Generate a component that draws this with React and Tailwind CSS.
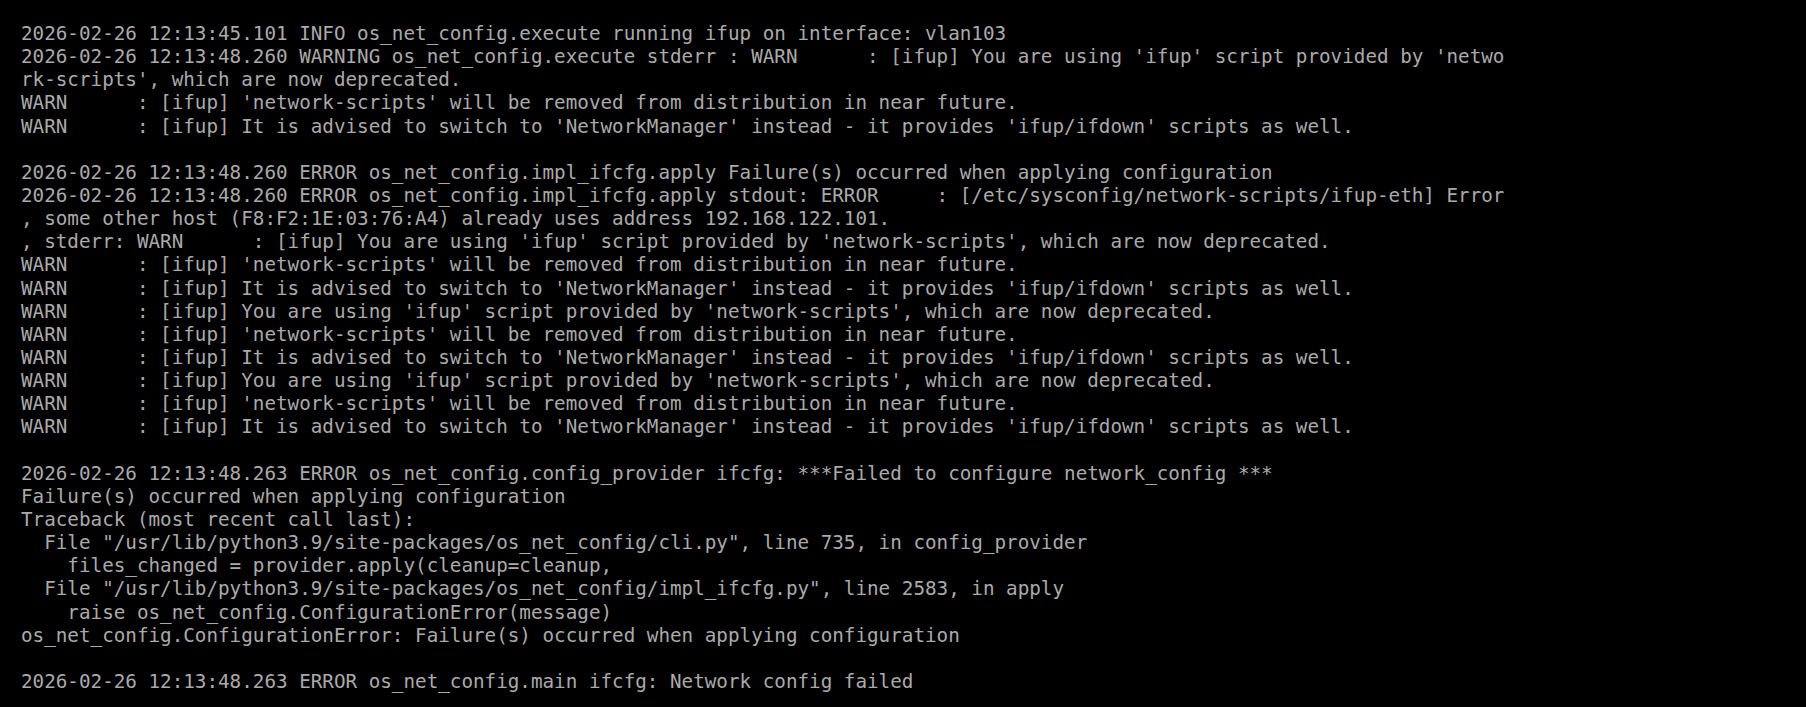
const LINES = [
  "2026-02-26 12:13:45.101 INFO os_net_config.execute running ifup on interface: vlan103",
  "2026-02-26 12:13:48.260 WARNING os_net_config.execute stderr : WARN      : [ifup] You are using 'ifup' script provided by 'netwo",
  "rk-scripts', which are now deprecated.",
  "WARN      : [ifup] 'network-scripts' will be removed from distribution in near future.",
  "WARN      : [ifup] It is advised to switch to 'NetworkManager' instead - it provides 'ifup/ifdown' scripts as well.",
  "",
  "2026-02-26 12:13:48.260 ERROR os_net_config.impl_ifcfg.apply Failure(s) occurred when applying configuration",
  "2026-02-26 12:13:48.260 ERROR os_net_config.impl_ifcfg.apply stdout: ERROR     : [/etc/sysconfig/network-scripts/ifup-eth] Error",
  ", some other host (F8:F2:1E:03:76:A4) already uses address 192.168.122.101.",
  ", stderr: WARN      : [ifup] You are using 'ifup' script provided by 'network-scripts', which are now deprecated.",
  "WARN      : [ifup] 'network-scripts' will be removed from distribution in near future.",
  "WARN      : [ifup] It is advised to switch to 'NetworkManager' instead - it provides 'ifup/ifdown' scripts as well.",
  "WARN      : [ifup] You are using 'ifup' script provided by 'network-scripts', which are now deprecated.",
  "WARN      : [ifup] 'network-scripts' will be removed from distribution in near future.",
  "WARN      : [ifup] It is advised to switch to 'NetworkManager' instead - it provides 'ifup/ifdown' scripts as well.",
  "WARN      : [ifup] You are using 'ifup' script provided by 'network-scripts', which are now deprecated.",
  "WARN      : [ifup] 'network-scripts' will be removed from distribution in near future.",
  "WARN      : [ifup] It is advised to switch to 'NetworkManager' instead - it provides 'ifup/ifdown' scripts as well.",
  "",
  "2026-02-26 12:13:48.263 ERROR os_net_config.config_provider ifcfg: ***Failed to configure network_config ***",
  "Failure(s) occurred when applying configuration",
  "Traceback (most recent call last):",
  '  File "/usr/lib/python3.9/site-packages/os_net_config/cli.py", line 735, in config_provider',
  "    files_changed = provider.apply(cleanup=cleanup,",
  '  File "/usr/lib/python3.9/site-packages/os_net_config/impl_ifcfg.py", line 2583, in apply',
  "    raise os_net_config.ConfigurationError(message)",
  "os_net_config.ConfigurationError: Failure(s) occurred when applying configuration",
  "",
  "2026-02-26 12:13:48.263 ERROR os_net_config.main ifcfg: Network config failed",
];

export default function App() {
  return (
    <div className="min-h-screen bg-black pl-[21px] pt-[22px] overflow-hidden">
      <div className="font-['DejaVu_Sans_Mono','Liberation_Mono',monospace] text-[19.25px] leading-[23.15px] text-[#aaaaaa] whitespace-pre">
        {LINES.map((line, i) => (
          <div key={i} className="h-[23.15px]">
            {line}
          </div>
        ))}
      </div>
    </div>
  );
}
